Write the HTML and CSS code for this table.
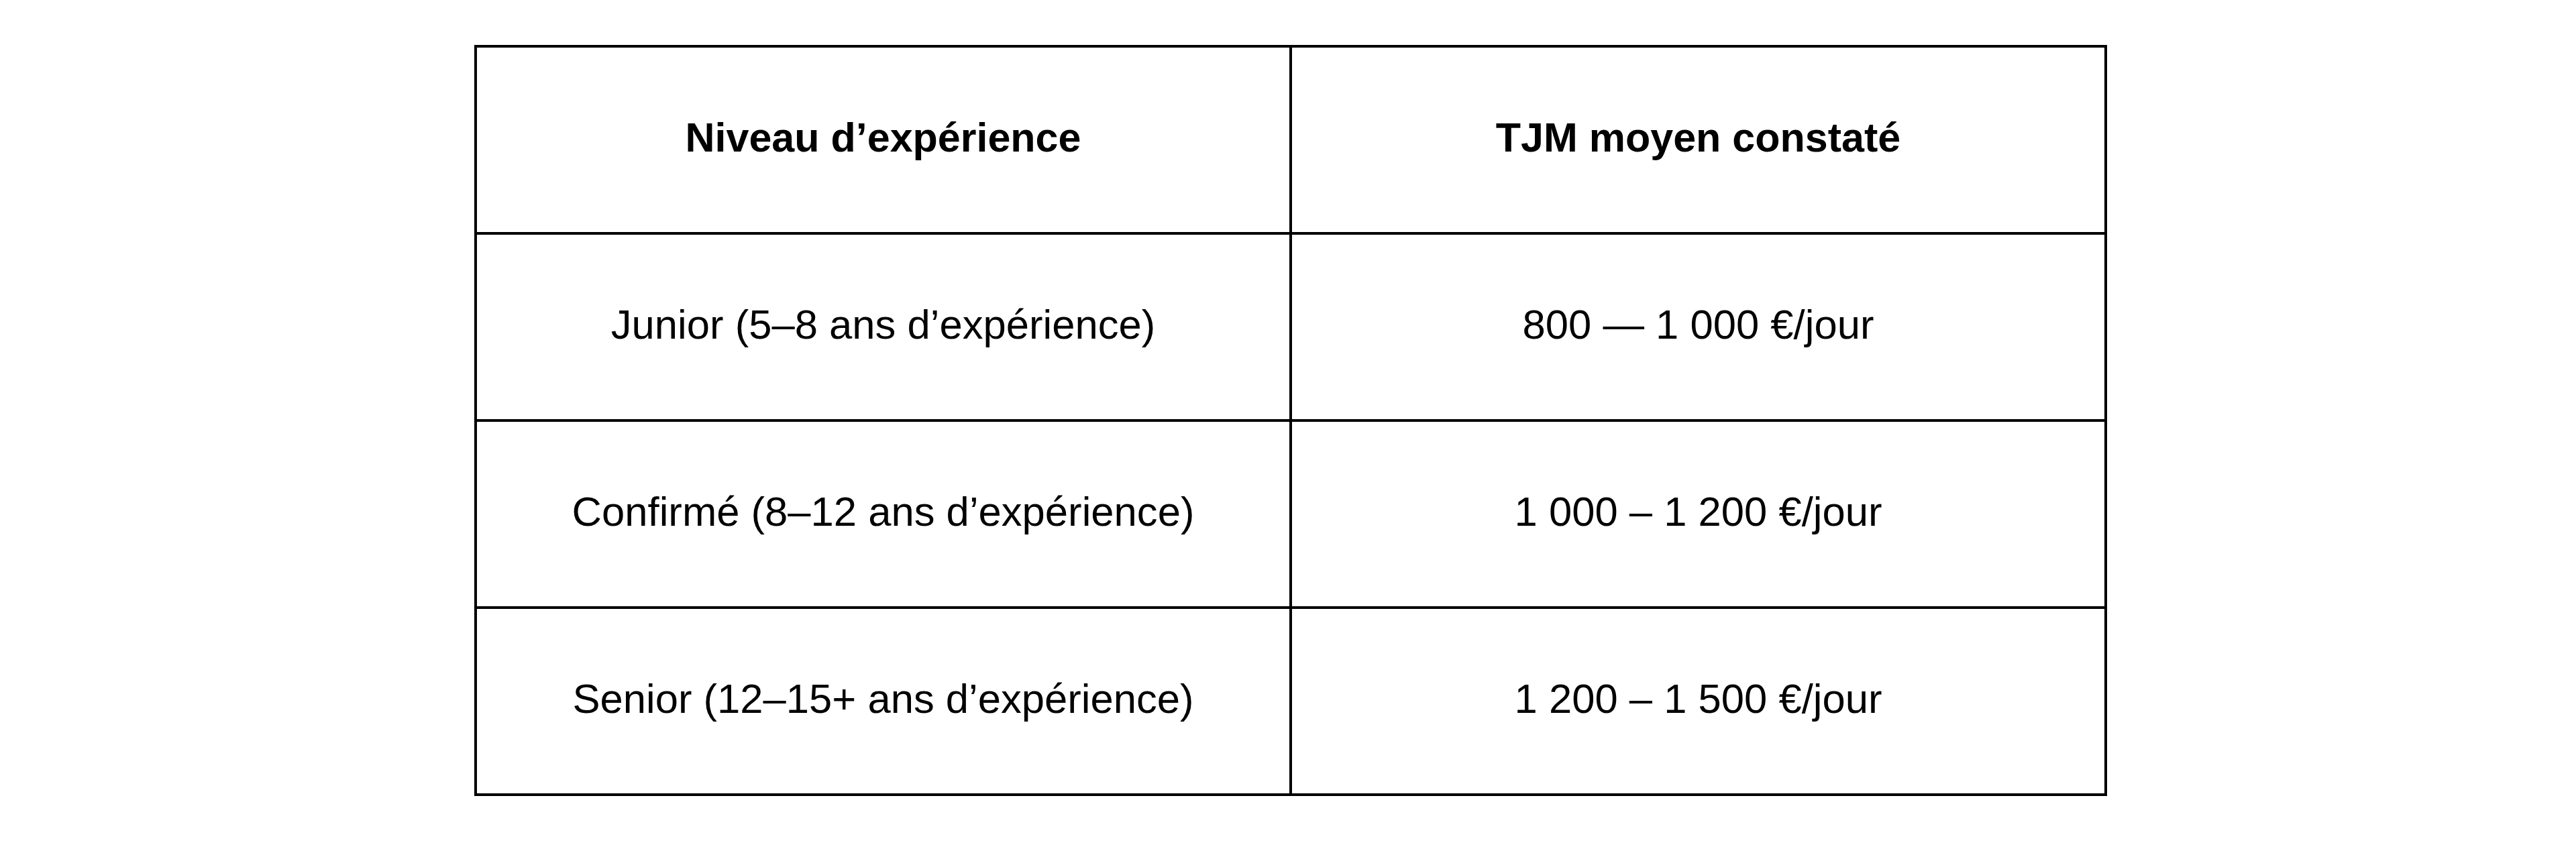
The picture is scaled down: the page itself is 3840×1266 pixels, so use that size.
FILE: index.html
```html
<!DOCTYPE html>
<html lang="fr">
<head>
<meta charset="utf-8">
<title>TJM</title>
<link rel="stylesheet" href="styles.css">
</head>
<body>
<table class="rates">
  <thead>
    <tr>
      <th>Niveau d’expérience</th>
      <th>TJM moyen constaté</th>
    </tr>
  </thead>
  <tbody>
    <tr>
      <td>Junior (5–8 ans d’expérience)</td>
      <td>800 — 1 000 €/jour</td>
    </tr>
    <tr>
      <td>Confirmé (8–12 ans d’expérience)</td>
      <td>1 000 – 1 200 €/jour</td>
    </tr>
    <tr>
      <td>Senior (12–15+ ans d’expérience)</td>
      <td>1 200 – 1 500 €/jour</td>
    </tr>
  </tbody>
</table>
</body>
</html>
```
FILE: styles.css
```css
html, body {
  margin: 0;
  background: #fff;
}
body {
  padding: 67px 0 0 707px;
  font-family: "Liberation Sans", Arial, sans-serif;
  color: #000;
}
.rates {
  border-collapse: separate;
  border-spacing: 0;
  table-layout: fixed;
  border-top: 4px solid #000;
  border-left: 4px solid #000;
}
.rates th,
.rates td {
  box-sizing: border-box;
  width: 1215px;
  height: 279px;
  border-right: 4px solid #000;
  border-bottom: 4px solid #000;
  padding: 0 0 7px 0;
  text-align: center;
  vertical-align: middle;
  line-height: 1.15;
}
.rates th {
  font-size: 61px;
  font-weight: bold;
}
.rates td {
  font-size: 61.6px;
  font-weight: normal;
}
```
